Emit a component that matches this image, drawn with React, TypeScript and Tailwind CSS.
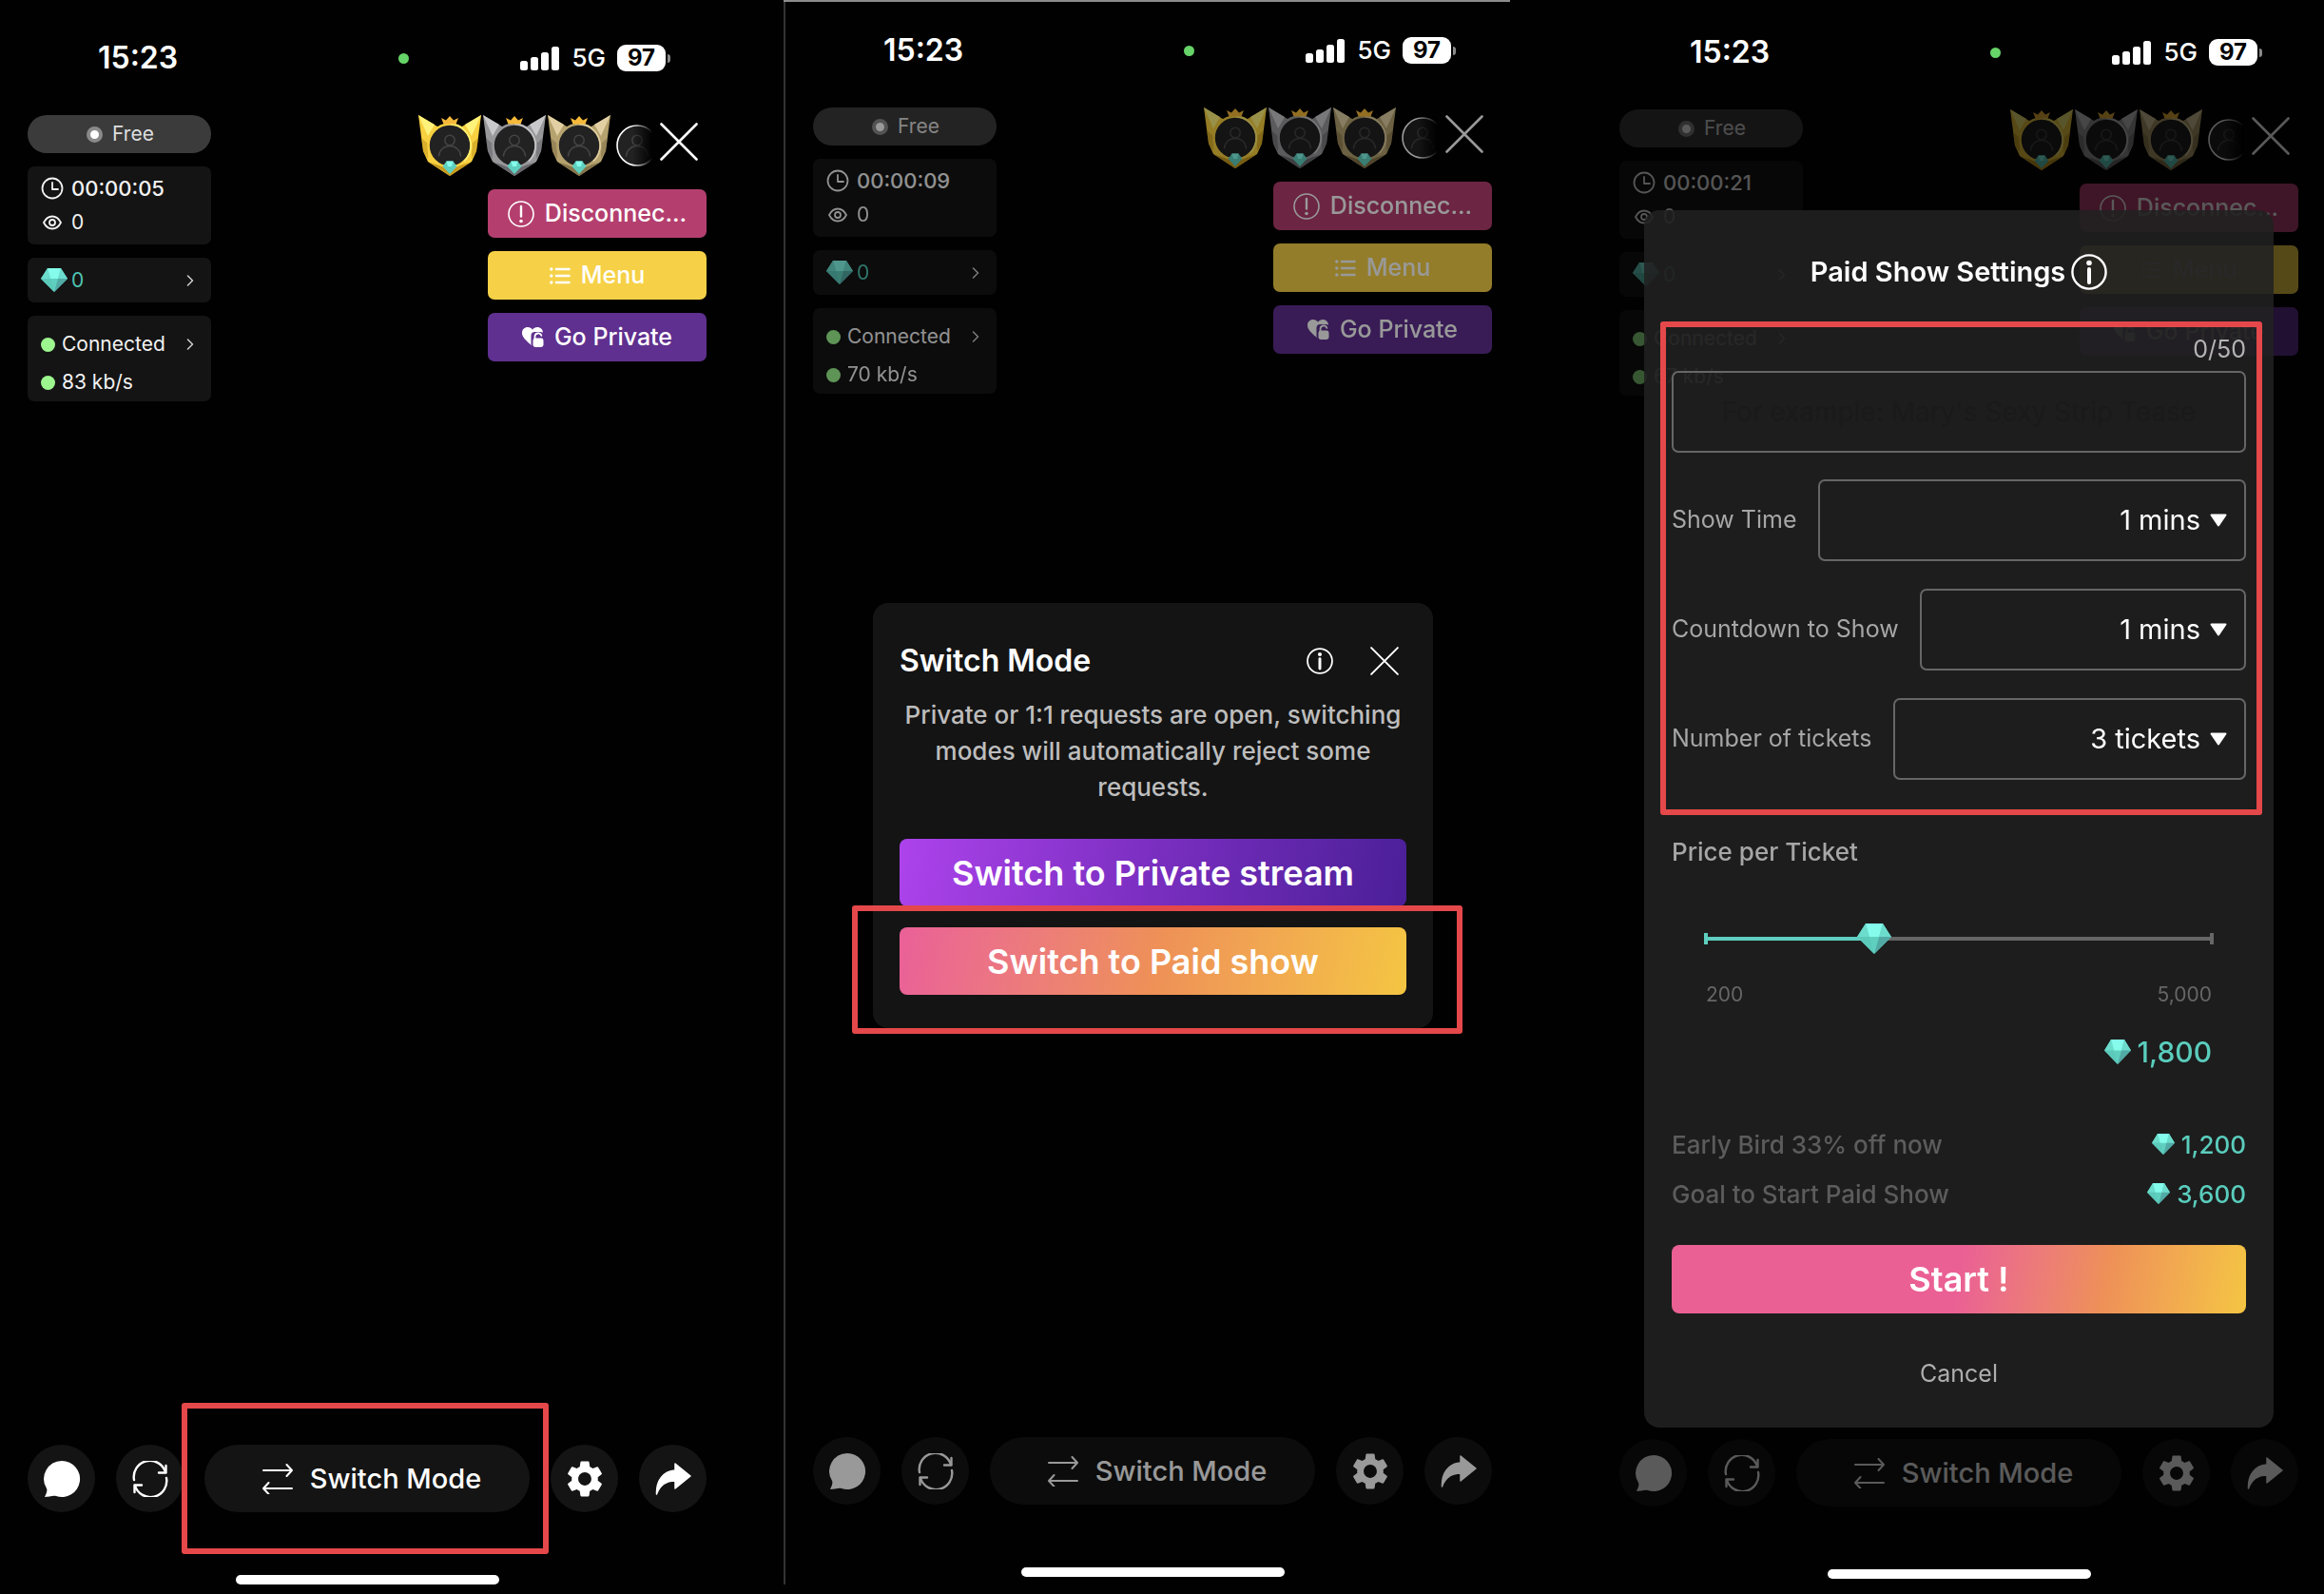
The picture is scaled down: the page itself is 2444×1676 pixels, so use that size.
import { useId, useState, type ReactNode } from "react";
import { MdSettings } from "react-icons/md";

/* ---------- icons ---------- */

function Gem({ className = "" }: { className?: string }) {
  return (
    <svg viewBox="0 0 28 25" preserveAspectRatio="none" className={className} aria-hidden="true">
      <path d="M7 0h14l7 11-14 14L0 11z" fill="#5fd0c0" />
      <path d="M7 0h14l-3 11h-8z" fill="#84fbeb" />
      <path d="M7 0l3 11H0zM21 0l-3 11h10z" fill="#6cdccd" />
      <path d="M0 11h10l4 14z" fill="#5ccabb" />
      <path d="M28 11H18l-4 14z" fill="#52aaa5" />
    </svg>
  );
}

function CrossIcon({ className = "" }: { className?: string }) {
  return (
    <svg viewBox="0 0 40 40" className={className} fill="none" stroke="currentColor" strokeWidth="2.6" strokeLinecap="round" aria-hidden="true">
      <path d="M1.5 1.5l37 37M38.5 1.5l-37 37" />
    </svg>
  );
}

function InfoIcon({ className = "" }: { className?: string }) {
  return (
    <svg viewBox="0 0 38 38" className={className} fill="none" stroke="currentColor" aria-hidden="true">
      <circle cx="19" cy="19" r="17.6" strokeWidth="2.4" />
      <path d="M19 16v14" strokeWidth="4" strokeLinecap="round" />
      <circle cx="19" cy="9.5" r="2.8" fill="currentColor" stroke="none" />
    </svg>
  );
}

function AlertIcon() {
  return (
    <svg viewBox="0 0 28 28" className="size-7" fill="none" stroke="currentColor" aria-hidden="true">
      <circle cx="14" cy="14" r="13" strokeWidth="1.6" />
      <path d="M14 6v10.5" strokeWidth="2.4" strokeLinecap="round" />
      <circle cx="14" cy="21.5" r="1.8" fill="currentColor" stroke="none" />
    </svg>
  );
}

function ListIcon() {
  return (
    <svg viewBox="0 0 22 18" className="h-[18px] w-[22px]" fill="none" stroke="currentColor" strokeLinecap="round" aria-hidden="true">
      <path d="M7 2h13.5M7 9h13.5M7 16h13.5" strokeWidth="2.6" />
      <path d="M1.8 2h.01M1.8 9h.01M1.8 16h.01" strokeWidth="3.4" />
    </svg>
  );
}

function HeartLockIcon() {
  return (
    <svg viewBox="0 0 23 21" className="h-[21px] w-[23px]" aria-hidden="true">
      <path d="M11 20C4 14 0 10.5 0 6 0 2.5 2.5 0 6 0c2 0 4 1 5 2.8C12 1 14 0 16 0c3.5 0 6 2.5 6 6 0 5-5 9-11 14z" fill="currentColor" />
      <rect x="9.5" y="5" width="14" height="16" rx="4" fill="#5f308f" />
      <rect x="11.5" y="11.5" width="11" height="9.5" rx="2.4" fill="currentColor" />
      <path d="M13.5 12V9.800a3.500 3.500 0 0 1 6.800-1" fill="none" stroke="currentColor" strokeWidth="1.8" strokeLinecap="round" />
    </svg>
  );
}

function ClockIcon() {
  return (
    <svg viewBox="0 0 24 24" className="size-6" fill="none" stroke="currentColor" strokeWidth="1.8" strokeLinecap="round" strokeLinejoin="round" aria-hidden="true">
      <circle cx="12" cy="12" r="10.5" />
      <path d="M12 6v7h6" />
    </svg>
  );
}

function EyeIcon() {
  return (
    <svg viewBox="0 0 20 16" className="h-4 w-5" fill="none" stroke="currentColor" strokeWidth="1.8" strokeLinejoin="round" aria-hidden="true">
      <path d="M1 8c2-4 5.500-6.500 9-6.500S17 4 19 8c-2 4-5.500 6.500-9 6.500S3 12 1 8z" />
      <circle cx="10" cy="8" r="3" />
    </svg>
  );
}

function Chevron() {
  return (
    <svg viewBox="0 0 8 12" className="h-3 w-2" fill="none" stroke="currentColor" strokeWidth="1.5" strokeLinecap="round" strokeLinejoin="round" aria-hidden="true">
      <path d="M1.5 1l5 5-5 5" />
    </svg>
  );
}

function ChatIcon() {
  return (
    <svg viewBox="0 0 40 40" className="size-10" fill="currentColor" aria-hidden="true">
      <path d="M20 1a19 19 0 1 1-6 37c-3-1-8 1-12 1 2-4 3-7 2-9A19 19 0 0 1 20 1z" />
    </svg>
  );
}

function RefreshIcon() {
  return (
    <svg viewBox="0 0 38 38" className="size-[38px]" fill="none" stroke="currentColor" strokeWidth="2.4" strokeLinecap="round" strokeLinejoin="round" aria-hidden="true">
      <path d="M2 20a17 17 0 0 1 33-8M36 18a17 17 0 0 1-33 8" />
      <path d="M35.5 5v7.500H28M2.500 33v-7.500H10" />
    </svg>
  );
}

function SwapIcon() {
  return (
    <svg viewBox="0 0 32 32" className="size-8" fill="none" stroke="currentColor" strokeWidth="2" strokeLinecap="round" strokeLinejoin="round" aria-hidden="true">
      <path d="M1 7h30M25.500 1L31 7l-5.500 6M31 26H1M6.500 20L1 26l5.500 6" />
    </svg>
  );
}

function ShareIcon() {
  return (
    <svg viewBox="0 0 38 34" className="h-[34px] w-[38px]" fill="currentColor" stroke="currentColor" strokeWidth="1.5" strokeLinejoin="round" aria-hidden="true">
      <path d="M21 1l16 13-16 13v-8C11 19 5 23 1.500 33 1 19 8 9 21 8z" />
    </svg>
  );
}

type BadgeTone = { light: string; mid: string; dark: string };

const badgeTones: BadgeTone[] = [
  { light: "#fff27a", mid: "#f8d040", dark: "#c79a1e" },
  { light: "#c9c9cb", mid: "#98989b", dark: "#68686c" },
  { light: "#e2d0a4", mid: "#b5a26e", dark: "#857349" },
];

function Person() {
  return (
    <g fill="none" stroke="#444446" strokeWidth="1.5" strokeLinecap="round">
      <circle cx="33" cy="26.5" r="5.2" />
      <path d="M21.500 43c.5-6 5-10.500 11.500-10.500S44 37 44.500 43" />
    </g>
  );
}

function WingBadge({ light, mid, dark }: BadgeTone) {
  return (
    <svg viewBox="0 0 66 64" className="h-16 w-[66px]" aria-hidden="true">
      <path d="M0 0l20 12L33 64 10 49 5 38z" fill={mid} />
      <path d="M66 0L46 12 33 64l23-15 5-11z" fill={mid} />
      <path d="M0 0l17 10-7 12z" fill={light} />
      <path d="M66 0L49 10l7 12z" fill={light} />
      <path d="M3 24l7 6v16L5 38zM63 24l-7 6v16l5-8z" fill={dark} opacity="0.6" />
      <path d="M12 50l21 14 21-14-21 6z" fill={dark} />
      <circle cx="33" cy="32" r="22.5" fill="#222223" stroke={mid} strokeWidth="2.6" />
      <path d="M33 9.500a22.500 22.500 0 0 1 15 39" fill="none" stroke={light} strokeWidth="1.6" />
      <path d="M24 3l5 2.500L33 1l4 4.500L42 3l-2.500 6.500h-13z" fill="#f6b93a" />
      <Person />
      <path d="M29.500 48.500h7l4 5.500L33 62l-7.500-8z" fill="#5fd0c0" />
      <path d="M29.500 48.500h7L35 54h-4z" fill="#84fbeb" />
    </svg>
  );
}

function FadedAvatar() {
  const id = useId();
  return (
    <svg viewBox="11 10 38 44" className="ml-1 mt-[10px] h-11 w-[38px]" aria-hidden="true">
      <defs>
        <linearGradient id={id} gradientUnits="userSpaceOnUse" x1="11" y1="0" x2="49" y2="0">
          <stop offset="0.45" stopColor="#000" stopOpacity="0" />
          <stop offset="1" stopColor="#000" />
        </linearGradient>
      </defs>
      <circle cx="33" cy="32" r="21" fill="#222223" stroke="#fff" strokeWidth="1.6" />
      <Person />
      <rect x="11" y="8" width="40" height="48" fill={`url(#${id})`} />
    </svg>
  );
}

/* ---------- shared pieces ---------- */

/** Red annotation frame drawn over whatever it is placed in. */
function Highlight({ className }: { className: string }) {
  return <div className={`pointer-events-none absolute z-10 rounded-[3px] border-6 border-[#e5484a] ${className}`} />;
}

function StatusBar() {
  return (
    <div className="flex h-[30px] items-center pr-[38px] pl-[74px]">
      <span className="text-[32px] leading-8 font-semibold">15:23</span>
      <span className="flex flex-1 justify-end pr-[117px]">
        <span className="size-[11px] rounded-full bg-[#66d468]" />
      </span>
      <svg viewBox="0 0 42 26" className="h-[26px] w-[42px]" fill="#fff" aria-hidden="true">
        <rect x="0" y="16" width="8" height="10" rx="2.5" />
        <rect x="11" y="12" width="8" height="14" rx="2.5" />
        <rect x="22" y="7" width="8" height="19" rx="2.5" />
        <rect x="33" y="1" width="8" height="25" rx="2.5" />
      </svg>
      <span className="ml-3 text-[26px] leading-8 font-medium">5G</span>
      <span className="ml-3 flex h-7 w-[51px] items-center justify-center rounded-[9px] bg-white text-2xl leading-7 font-bold text-black">97</span>
      <span className="ml-[2px] h-[9px] w-[3px] rounded-r-full bg-[#8a8a8a]" />
    </div>
  );
}

function RoundButton({ label, children }: { label: string; children: ReactNode }) {
  return (
    <button aria-label={label} className="flex size-[71px] shrink-0 items-center justify-center rounded-full bg-[#141414]">
      {children}
    </button>
  );
}

type PhoneProps = {
  time: string;
  speed: string;
  className: string;
  dim?: string;
  highlightSwitch?: boolean;
  children?: ReactNode;
};

function Phone({ time, speed, className, dim = "", highlightSwitch, children }: PhoneProps) {
  return (
    <section className={`relative flex min-w-0 flex-1 flex-col pr-[27px] pl-[29px] ${className}`}>
      <StatusBar />

      <div className={`mt-[45px] flex items-start justify-between ${dim}`}>
        <div className="flex w-[193px] flex-col gap-[14px] text-[21px] text-[#f2f2f2]">
          <div className="flex h-10 items-center justify-center gap-[10px] rounded-full bg-[#3b3b3b] pl-[2px] text-[#dedede]">
            <span className="size-[17px] rounded-full border-4 border-[#8a8a8a] bg-white" />
            Free
          </div>
          <div className="rounded-[7px] bg-[#141414] py-[5px] pl-[14px]">
            <div className="flex h-9 items-center gap-2 text-[22px] font-medium">
              <ClockIcon />
              {time}
            </div>
            <div className="flex h-9 items-center gap-[10px] pl-[2px]">
              <EyeIcon />0
            </div>
          </div>
          <button className="flex h-[47px] items-center gap-1 rounded-[7px] bg-[#141414] pr-[18px] pl-[14px] text-[#4fc3b2]">
            <Gem className="h-[25px] w-7" />0
            <span className="ml-auto text-[#cfcfcf]">
              <Chevron />
            </span>
          </button>
          <div className="rounded-[7px] bg-[#141414] pt-[10px] pr-[18px] pl-[14px]">
            <button className="flex h-10 w-full items-center gap-[7px]">
              <span className="size-[15px] rounded-full bg-[#9df78f]" />
              Connected
              <span className="ml-auto text-[#cfcfcf]">
                <Chevron />
              </span>
            </button>
            <div className="flex h-10 items-center gap-[7px]">
              <span className="size-[15px] rounded-full bg-[#9df78f]" />
              {speed}
            </div>
          </div>
        </div>

        <div className="flex flex-col items-end gap-[14px] text-[25px] font-medium">
          <div className="flex h-16 gap-[2px] pr-[9px]">
            {badgeTones.map((tone) => (
              <WingBadge key={tone.light} {...tone} />
            ))}
            <FadedAvatar />
            <button aria-label="Close" className="mt-2 ml-[6px] size-10">
              <CrossIcon className="size-10" />
            </button>
          </div>
          <button className="flex h-[51px] w-[230px] items-center justify-center gap-[11px] rounded-[7px] bg-[#b43f6f]">
            <AlertIcon />
            Disconnec...
          </button>
          <button className="flex h-[51px] w-[230px] items-center justify-center gap-[11px] rounded-[7px] bg-[#f6d147]">
            <ListIcon />
            Menu
          </button>
          <button className="flex h-[51px] w-[230px] items-center justify-center gap-[11px] rounded-[7px] bg-[#5f308f]">
            <HeartLockIcon />
            Go Private
          </button>
        </div>
      </div>

      <div className={`mt-auto flex items-center gap-[22px] ${dim}`}>
        <RoundButton label="Chat">
          <ChatIcon />
        </RoundButton>
        <RoundButton label="Flip camera">
          <RefreshIcon />
        </RoundButton>
        <div className="relative flex-1">
          <button className="flex h-[71px] w-full items-center justify-center gap-[18px] rounded-full bg-[#141414] pl-[10px] text-[29px] font-medium">
            <SwapIcon />
            Switch Mode
          </button>
          {highlightSwitch && <Highlight className="-inset-y-11 -right-5 -left-6" />}
        </div>
        <RoundButton label="Settings">
          <MdSettings className="size-[46px]" />
        </RoundButton>
        <RoundButton label="Share">
          <ShareIcon />
        </RoundButton>
      </div>
      <div className="mt-[66px] h-[10px] w-[277px] self-center rounded-full bg-white" />

      {children}
    </section>
  );
}

/* ---------- dialogs ---------- */

function SwitchModeDialog() {
  return (
    <div role="dialog" aria-label="Switch Mode" className="absolute top-[634px] right-[89px] left-[92px] rounded-2xl bg-[#141414] px-7 pt-[41px] pb-[35px]">
      <div className="flex h-10 items-center pr-2">
        <h2 className="text-[32px] font-semibold">Switch Mode</h2>
        <button aria-label="Info" className="ml-auto">
          <InfoIcon className="size-7" />
        </button>
        <button aria-label="Close" className="ml-[39px]">
          <CrossIcon className="size-[30px]" />
        </button>
      </div>
      <p className="mt-[18px] text-center text-[26px] leading-[38px] font-medium text-[#bdbdbd]">
        Private or 1:1 requests are open, switching modes will automatically reject some requests.
      </p>
      <button className="mt-[35px] h-[71px] w-full rounded-lg bg-linear-100 from-[#ad43ec] via-[#7a2ec0] to-[#4b1f98] text-4xl font-semibold">
        Switch to Private stream
      </button>
      <div className="relative mt-[22px]">
        <button className="h-[71px] w-full rounded-lg bg-linear-100 from-[#ea6098] via-[#ee9058] to-[#f4c542] text-4xl font-semibold">
          Switch to Paid show
        </button>
        <Highlight className="-top-[23px] -right-[59px] -bottom-[41px] -left-[50px]" />
      </div>
    </div>
  );
}

function SelectRow({ label, options }: { label: string; options: string[] }) {
  const id = useId();
  return (
    <div className="flex h-[86px] items-center gap-[22px]">
      <label htmlFor={id} className="text-[25px] text-[#a6a6a6]">
        {label}
      </label>
      <div className="relative h-full flex-1">
        <select
          id={id}
          className="h-full w-full appearance-none rounded-[7px] border-2 border-[#666] bg-transparent pr-[46px] text-right text-[29px] text-white [text-align-last:right]"
        >
          {options.map((o) => (
            <option key={o}>{o}</option>
          ))}
        </select>
        <svg viewBox="0 0 18 14" className="pointer-events-none absolute top-[36px] right-5 h-[14px] w-[18px]" fill="#fff" stroke="#fff" strokeWidth="2" strokeLinejoin="round" aria-hidden="true">
          <path d="M1.5 1.5h15L9 12.5z" />
        </svg>
      </div>
    </div>
  );
}

const MIN_PRICE = 200;
const MAX_PRICE = 5000;
const STEP = 200;

function PriceSlider({ value, onChange }: { value: number; onChange: (v: number) => void }) {
  const percent = ((value - MIN_PRICE) / (MAX_PRICE - MIN_PRICE)) * 100;
  return (
    <div className="relative mx-[34px] mt-[55px] flex h-10 items-center">
      <div className="flex h-1 w-full items-center bg-[#666]">
        <div className="h-1 bg-[#5fcfc0]" style={{ width: `${percent}%` }} />
      </div>
      <span className="absolute left-0 h-3 w-1 bg-[#5fcfc0]" />
      <span className="absolute right-0 h-3 w-1 bg-[#666]" />
      <span className="absolute -translate-x-1/2" style={{ left: `${percent}%` }}>
        <Gem className="h-8 w-9" />
      </span>
      <input
        type="range"
        aria-label="Price per Ticket"
        min={MIN_PRICE}
        max={MAX_PRICE}
        step={STEP}
        value={value}
        onChange={(e) => onChange(Number(e.target.value))}
        className="absolute inset-0 w-full opacity-0"
      />
    </div>
  );
}

function PriceRow({ label, value }: { label: string; value: number }) {
  return (
    <div className="flex h-[52px] items-center justify-between text-[26px] font-medium text-[#5c5c5c]">
      {label}
      <span className="flex items-center gap-[7px] text-[#5acdbd]">
        <Gem className="h-[22px] w-6" />
        {value.toLocaleString("en-US")}
      </span>
    </div>
  );
}

function PaidShowDialog() {
  const [title, setTitle] = useState("");
  const [price, setPrice] = useState(1800);

  return (
    <form
      role="dialog"
      aria-label="Paid Show Settings"
      onSubmit={(e) => e.preventDefault()}
      className="absolute top-[221px] right-[53px] left-[55px] flex flex-col rounded-2xl bg-[#212121]/88 px-[29px] pt-[45px] pb-9"
    >
      <div className="flex h-10 items-center justify-center gap-[6px]">
        <h2 className="text-[29px] font-semibold">Paid Show Settings</h2>
        <button type="button" aria-label="Info">
          <InfoIcon className="size-[38px]" />
        </button>
      </div>

      <div className="relative mt-[45px] flex flex-col">
        <div className="h-8 text-right text-[25px] leading-8 text-[#b4b4b4]">{title.length}/50</div>
        <input
          aria-label="Show title"
          maxLength={50}
          value={title}
          onChange={(e) => setTitle(e.target.value)}
          placeholder="For example: Mary's Sexy Strip Tease"
          className="mt-[7px] h-[86px] w-full rounded-[7px] border-2 border-[#666] bg-transparent text-center text-[28px] placeholder:text-[#1a1a1a]"
        />
        <div className="mt-7 flex flex-col gap-[29px]">
          <SelectRow label="Show Time" options={["1 mins", "5 mins", "10 mins"]} />
          <SelectRow label="Countdown to Show" options={["1 mins", "5 mins", "10 mins"]} />
          <SelectRow label="Number of tickets" options={["3 tickets", "5 tickets", "10 tickets"]} />
        </div>
        <Highlight className="-top-[13px] -right-[17px] -bottom-[37px] -left-3" />
      </div>

      <div className="mt-[60px] text-[26px] leading-8 font-medium text-[#a6a6a6]">Price per Ticket</div>
      <PriceSlider value={price} onChange={setPrice} />
      <div className="mx-9 mt-[23px] flex justify-between text-[21px] leading-8 text-[#666]">
        <span>200</span>
        <span>5,000</span>
      </div>
      <div className="mx-9 mt-6 flex h-10 items-center justify-end gap-[7px] text-[30px] font-medium text-[#5acdbd]">
        <Gem className="h-[26px] w-7" />
        {price.toLocaleString("en-US")}
      </div>

      <div className="mt-[51px]">
        <PriceRow label="Early Bird 33% off now" value={(price * 2) / 3} />
        <PriceRow label="Goal to Start Paid Show" value={price * 2} />
      </div>

      <button className="mt-7 h-[72px] w-full rounded-lg bg-linear-100 from-[#ea6094] from-50% via-[#ee9058] via-75% to-[#f4c542] text-4xl font-semibold">
        Start !
      </button>
      <button type="button" className="mt-11 h-10 self-center text-[25px] text-[#aeaeae]">
        Cancel
      </button>
    </form>
  );
}

export default function App() {
  return (
    <main className="flex min-h-screen bg-[#010101] font-['Inter',sans-serif] text-white">
      <Phone time="00:00:05" speed="83 kb/s" className="pt-[46px] pb-[10px]" highlightSwitch />
      <div className="mb-[10px] ml-[54px] w-[2px] bg-[#333]" />
      <Phone time="00:00:09" speed="70 kb/s" className="pt-[38px] pb-[18px]" dim="opacity-60">
        <div className="absolute top-0 right-2 -left-[2px] h-[2px] bg-[#8c8c8c]" />
        <SwitchModeDialog />
      </Phone>
      <Phone time="00:00:21" speed="67 kb/s" className="ml-[78px] pt-10 pb-4" dim="opacity-35">
        <PaidShowDialog />
      </Phone>
    </main>
  );
}
